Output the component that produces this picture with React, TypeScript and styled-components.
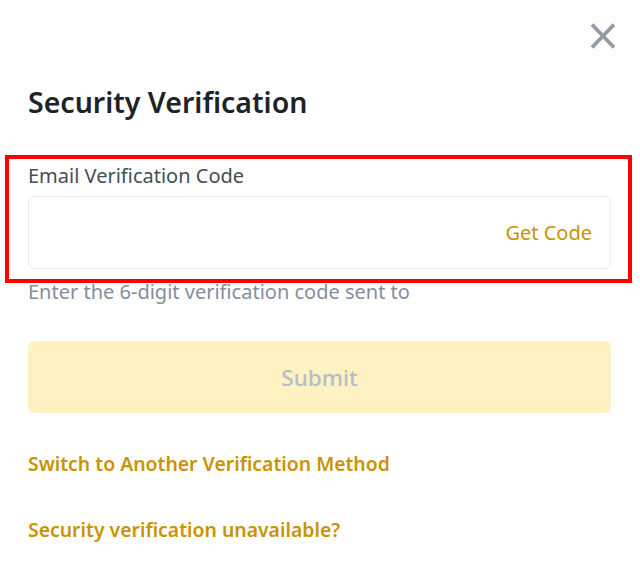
import React from "react";
import styled, { createGlobalStyle } from "styled-components";

const GlobalStyle = createGlobalStyle`
  html, body { margin: 0; padding: 0; background: #ffffff; }
  body { font-family: "Noto Sans", "Open Sans", "Liberation Sans", sans-serif; }
  * { box-sizing: border-box; }
`;

const Page = styled.div`
  width: 640px;
  height: 568px;
  background: #ffffff;
  display: flex;
  flex-direction: column;
  padding: 0 29px 0 28px;
  position: relative;
`;

const TopBar = styled.div`
  display: flex;
  justify-content: flex-end;
  padding-top: 23px;
  margin-right: -5px;
  height: 52px;
`;

const CloseButton = styled.button`
  width: 26px;
  height: 26px;
  border: none;
  background: none;
  padding: 0;
  cursor: pointer;
  display: flex;
  align-items: center;
  justify-content: center;
`;

const Title = styled.h1`
  margin: 32px 0 0;
  font-size: 28.5px;
  line-height: 36px;
  font-weight: 600;
  color: #1e2329;
`;

const FieldGroup = styled.div`
  position: relative;
  margin-top: 44px;
  display: flex;
  flex-direction: column;
`;

const Highlight = styled.div`
  position: absolute;
  left: -23px;
  right: -21px;
  top: -9px;
  bottom: -14px;
  border: 4px solid #ff0000;
  pointer-events: none;
`;

const Label = styled.label`
  font-size: 20px;
  line-height: 24px;
  color: #474d57;
`;

const InputBox = styled.div`
  margin-top: 8px;
  height: 73px;
  border: 1px solid #eaecef;
  border-radius: 6px;
  display: flex;
  align-items: center;
  padding: 0 18px 0 16px;
`;

const Input = styled.input`
  flex: 1;
  border: none;
  outline: none;
  background: transparent;
  font-size: 20px;
  font-family: inherit;
  min-width: 0;
`;

const GetCode = styled.span`
  font-size: 20px;
  color: #c99400;
  cursor: pointer;
`;

const Helper = styled.div`
  margin-top: 11px;
  font-size: 20px;
  line-height: 24px;
  color: #848e9c;
`;

const SubmitButton = styled.button`
  margin-top: 37px;
  height: 72px;
  width: 100%;
  border: none;
  border-radius: 6px;
  background: #fef1c2;
  color: #b7bdc6;
  font-family: inherit;
  font-size: 22.5px;
  font-weight: 500;
`;

const LinkText = styled.a<{ $gap: number }>`
  margin-top: ${(p) => p.$gap}px;
  font-size: 19.4px;
  line-height: 24px;
  font-weight: 600;
  color: #c99400;
  text-decoration: none;
  cursor: pointer;
`;

export default function App() {
  return (
    <>
      <GlobalStyle />
      <Page>
        <TopBar>
          <CloseButton aria-label="close">
            <svg width="26" height="26" viewBox="0 0 26 26">
              <path d="M2 1.5 L24 24.5 M24 1.5 L2 24.5" stroke="#929aa5" strokeWidth="3.8" strokeLinecap="butt" />
            </svg>
          </CloseButton>
        </TopBar>
        <Title>Security Verification</Title>
        <FieldGroup>
          <Highlight />
          <Label>Email Verification Code</Label>
          <InputBox>
            <Input />
            <GetCode>Get Code</GetCode>
          </InputBox>
        </FieldGroup>
        <Helper>Enter the 6-digit verification code sent to</Helper>
        <SubmitButton>Submit</SubmitButton>
        <LinkText $gap={39}>Switch to Another Verification Method</LinkText>
        <LinkText $gap={42}>Security verification unavailable?</LinkText>
      </Page>
    </>
  );
}
